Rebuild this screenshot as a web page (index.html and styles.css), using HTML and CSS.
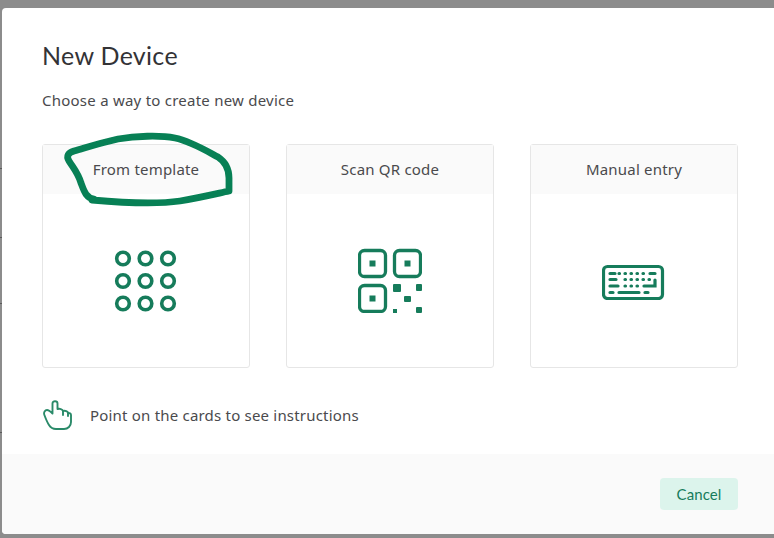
FILE: index.html
```html
<!DOCTYPE html>
<html lang="en">
<head>
<meta charset="utf-8">
<title>New Device</title>
<link rel="stylesheet" href="styles.css">
</head>
<body>
<div class="backdrop">
  <i class="tick tick-a"></i><i class="tick tick-b"></i><i class="tick tick-c"></i><i class="tick tick-d"></i>
  <section class="modal">
    <div class="modal-body">
      <h1 class="title">New Device</h1>
      <p class="subtitle">Choose a way to create new device</p>
      <div class="cards">
        <article class="card">
          <header class="card-head">From template</header>
          <div class="card-icon">
            <svg width="68" height="69" viewBox="0 0 68 69" fill="none" stroke="#167c5b" stroke-width="3.600">
              <circle cx="11" cy="12.500" r="6.300"/><circle cx="33.500" cy="12.500" r="6.300"/><circle cx="56" cy="12.500" r="6.300"/>
              <circle cx="11" cy="35" r="6.300"/><circle cx="33.500" cy="35" r="6.300"/><circle cx="56" cy="35" r="6.300"/>
              <circle cx="11" cy="57.500" r="6.300"/><circle cx="33.500" cy="57.500" r="6.300"/><circle cx="56" cy="57.500" r="6.300"/>
            </svg>
          </div>
        </article>
        <article class="card">
          <header class="card-head">Scan QR code</header>
          <div class="card-icon">
            <svg width="64" height="65" viewBox="0 0 64 65" fill="none" stroke="#167c5b" stroke-width="3.300">
              <rect x="1.500" y="2.500" width="26" height="26" rx="5"/><rect x="36.500" y="2.500" width="26" height="26" rx="5"/><rect x="1.500" y="37.500" width="26" height="26" rx="5"/>
              <g fill="#167c5b" stroke="none">
                <rect x="11.500" y="12.500" width="6" height="6"/><rect x="46.500" y="12.500" width="6" height="6"/><rect x="11.500" y="47.500" width="6" height="6"/>
                <rect x="35" y="36" width="8" height="8" rx="1"/><rect x="58" y="36" width="6" height="7" rx="1"/><rect x="46" y="48" width="7" height="6" rx="1"/><rect x="35" y="61" width="4" height="4"/><rect x="58" y="59" width="6" height="6" rx="1"/>
              </g>
            </svg>
          </div>
        </article>
        <article class="card">
          <header class="card-head">Manual entry</header>
          <div class="card-icon">
            <svg width="64" height="39" viewBox="0 0 64 39" fill="none">
              <rect x="1.500" y="5.500" width="59" height="32" rx="4" stroke="#167c5b" stroke-width="3.200"/>
              <g stroke="#167c5b" stroke-width="3.200" stroke-linecap="round">
                <path d="M8 12.500h5M17 12.500h.5M23 12.500h.5M29 12.500h.5M35 12.500h.5M41 12.500h.5M48 12.500h5"/>
                <path d="M8 18.500h6M23 18.500h.5M29 18.500h.5M35 18.500h.5M41 18.500h.5M47 18.500h.5"/>
                <path d="M8 25h8M23 25h.5M29 25h.5M35 25h.5M42 25h11v-6"/>
                <path d="M8 31.500h3M17 31.500h20M43 31.500h3"/>
              </g>
            </svg>
          </div>
        </article>
      </div>
      <div class="hint">
        <svg class="hint-icon" width="31" height="30" viewBox="0 0 31 30" fill="none" stroke="#2a8a69" stroke-width="1.900" stroke-linejoin="round" stroke-linecap="round">
          <path d="M7 25C5 22 3.500 18 2.200 14.500 1.500 12.500 3 10 5 10c1.800 0 3.500 1.500 5.500 3.500V3.500c0-3 5-3 5 0V9c2-.5 5 0 5.500 2 2-.5 5 0 5 2 1.500-.3 3 .5 3 2v7c0 4-3 7-7 7h-8C11 29 8.500 27.500 7 25z"/>
          <path d="M21 11v4M26 13v3"/>
        </svg>
        <span>Point on the cards to see instructions</span>
      </div>
    </div>
    <footer class="modal-foot">
      <button class="cancel" type="button">Cancel</button>
    </footer>
  </section>
  <svg class="scribble" width="774" height="538" viewBox="0 0 774 538" fill="none">
    <path d="M94 199C86 198 84 191 81 183 78 173 74 169 69 161 66 156 68 153 74 151 88 147 100 143 118 139 135 136 160 135 175 138 190 141 205 150 218 157 227 163 229 170 229 178V191C215 194 198 198 180 201 160 204 125 203 92 200" stroke="#078055" stroke-width="6.800" stroke-linecap="round" stroke-linejoin="round"/>
  </svg>
</div>
</body>
</html>
```
FILE: styles.css
```css
* { box-sizing: border-box; }
html, body { margin: 0; height: 100%; overflow: hidden; }
body { font-family: "Noto Sans", "Open Sans", sans-serif; color: #4a4a4d; }
.backdrop { position: relative; width: 774px; height: 538px; background: #8c8c8c; padding: 8px 0 4px 2px; overflow: hidden; }
.tick { position: absolute; left: 0; width: 2px; height: 1px; background: #5a5a5a; }
.tick-a { top: 168px; }
.tick-b { top: 237px; }
.tick-c { top: 303px; }
.tick-d { top: 432px; }
.modal { width: 800px; height: 526px; background: #fff; border-radius: 4px; display: flex; flex-direction: column; }
.modal-body { flex: 1; padding: 31px 40px 0; }
.title { margin: 0; font-family: "Lato", sans-serif; font-size: 25px; font-weight: 400; letter-spacing: 0.3px; line-height: 32px; color: #333336; }
.subtitle { margin: 17px 0 0; font-size: 15px; letter-spacing: 0.24px; line-height: 24px; }
.cards { display: flex; gap: 36px; margin-top: 32px; }
.card { width: 208px; height: 224px; border: 1px solid #e6e6e6; border-radius: 3px; display: flex; flex-direction: column; }
.card-head { height: 49px; background: #fafafa; display: flex; align-items: center; justify-content: center; font-size: 15px; letter-spacing: 0.2px; padding-bottom: 1px; }
.card-icon { flex: 1; display: flex; align-items: center; justify-content: center; }
.hint { display: flex; align-items: center; gap: 17px; margin-top: 32px; font-size: 15px; letter-spacing: 0.2px; }
.hint-icon { display: block; }
.modal-foot { height: 80px; background: #fafafa; border-radius: 0 0 4px 4px; padding: 24px 0 0 658px; display: flex; }
.cancel { width: 78px; height: 32px; border: 0; border-radius: 4px; background: #dcf4ec; color: #167c5b; font-family: "Lato", sans-serif; font-size: 15px; letter-spacing: 0.1px; }
.scribble { position: absolute; left: 0; top: 0; pointer-events: none; }
```
